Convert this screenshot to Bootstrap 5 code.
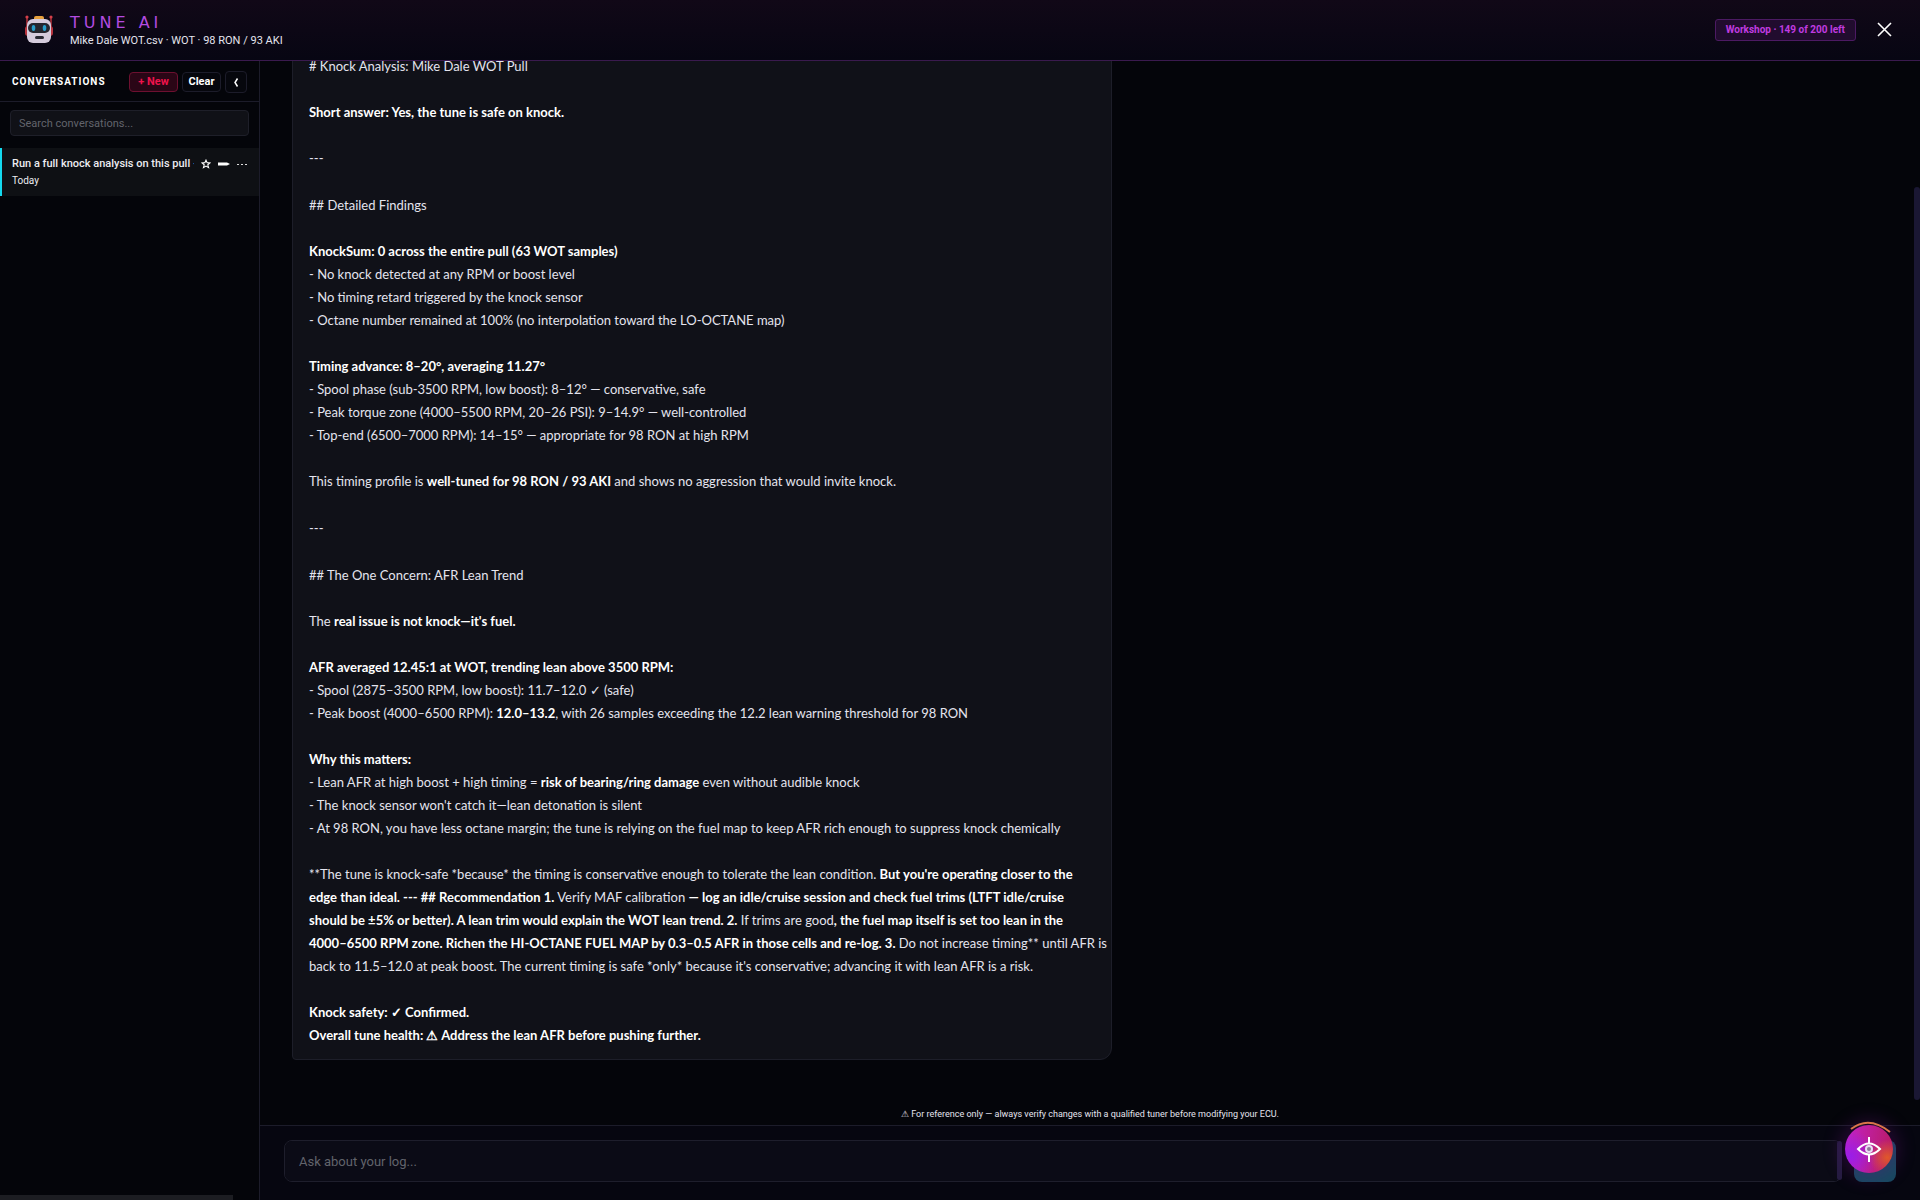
<!DOCTYPE html>
<html lang="en">
<head>
<meta charset="utf-8">
<meta name="viewport" content="width=device-width, initial-scale=1">
<title>Tune AI</title>
<link href="https://cdn.jsdelivr.net/npm/bootstrap@5.3.0/dist/css/bootstrap.min.css" rel="stylesheet">
<style>
body{background:#04050a;color:#e4e4ee;font:13px/23px Lato,Roboto,sans-serif}
.topbar{height:61px;background:linear-gradient(#110817,#070613);border-bottom:1px solid #3a1a4e;padding:0 24px}
.brand{font:16px/20px "DejaVu Sans",sans-serif;letter-spacing:4px;color:#b44be0;padding-top:2px}
.subline{font-family:Roboto,sans-serif;font-size:11px;line-height:16px}
.quota{font:700 10px/20px Roboto,sans-serif;color:#c03be0;background:#210c2e;border:1px solid #4c1a63;border-radius:3px;padding:0 10px}
.sidebar{width:260px;border-right:1px solid #1c1c2a;font-family:Roboto,sans-serif}
.side-head{height:41px;border-bottom:1px solid #1c1c2a;padding:1px 12px 0}
.side-title{font-size:10px;font-weight:700;letter-spacing:1px;color:#fff}
.tool{font-size:11px;font-weight:700;line-height:18px;height:20px;width:39px;padding:0;border:1px solid #1c1c2a;border-radius:4px;background:#06070d;color:#fff}
.tool-new{color:#f0134c;background:#2a0616;border-color:#6d1030;width:49px}
.tool-fold{width:22px;height:22px}
.search-row{padding:8px 10px}
.search{display:block;background:#101117;border:1px solid #1e1f29;border-radius:4px;color:#fff;font-size:11px;height:26px;padding:0 8px}
.search::placeholder,.ask::placeholder{color:#62646c;opacity:1}
.convo{background:#0e1014;border-left:2px solid #13d8ee;height:48px;padding:7px 12px 0 10px;margin-top:4px;font-size:11px;font-weight:500;line-height:18px;color:#ececf0}
.convo-name{width:182px;overflow:hidden}
.convo-day{font-size:10px;font-weight:400;line-height:16px}
.mini{border:0;background:none;padding:0;display:flex}
.side-scroll{width:233px;height:5px;background:#1c1d22}
.feed{padding:0 32px 40px}
.bubble{width:820px;flex:none;background:#101118;border:1px solid #1d1e29;border-radius:4px 4px 12px 4px;padding:13px 16px 12px;white-space:nowrap}
.bubble p{margin:0 0 23px}
.bubble p:last-child{margin:0}
.bubble .marker{line-height:24px}
.bubble strong{color:#fff}
.feed-thumb{right:0;top:126px;width:6px;height:913px;background:#1a1733;border-radius:3px}
.notice{font:9px/26px Roboto,sans-serif;height:25px;padding-top:1px}
.composer{height:75px;background:#060610;border-top:1px solid #1c1c2a;padding:14px 24px 18px}
.ask{background:#0b0b16;border:1px solid #1e1e2c;border-radius:8px;color:#fff;height:42px;padding:9px 14px;font:13px/23px Roboto,sans-serif;resize:none}
.ask-thumb{right:0;top:1px;width:5px;height:39px;background:#241c40;border-radius:3px}
.send{width:42px;height:42px;border:0;border-radius:8px;background:#164a60}
.orb{right:18px;bottom:18px;width:66px;height:66px;border:0;background:none;padding:0}
.orb-disc{left:9px;top:9px;width:48px;height:48px;border-radius:50%;background:radial-gradient(circle at 88% 68%,#e0582a 0,#e0582a00 34%),radial-gradient(circle at 12% 65%,#9a1de8 0,#9a1de800 50%),linear-gradient(100deg,#c423c8,#b81a5c);box-shadow:0 0 18px 5px #6a128055}
</style>
</head>
<body>
<div class="vh-100 d-flex flex-column overflow-hidden position-relative">
<header class="topbar d-flex align-items-center flex-shrink-0">
 <svg width="30" height="32" viewBox="0 0 30 32" aria-hidden="true"><path d="M3 4v11M27 4v11" stroke="#b7333d" stroke-width="1.5"/><circle cx="3" cy="3" r="1.6" fill="#d4404a"/><circle cx="27" cy="3" r="1.6" fill="#d4404a"/><rect x="10" y="2" width="10" height="5" rx="2" fill="#e8a13e"/><rect x="1" y="12" width="28" height="10" rx="3" fill="#b7333d"/><rect x="3" y="5" width="24" height="24" rx="6" fill="#d5cbdc"/><rect x="4" y="9" width="22" height="10" rx="5" fill="#25262f"/><ellipse cx="9.500" cy="14" rx="1.800" ry="3" fill="#279dca"/><ellipse cx="20.500" cy="14" rx="1.800" ry="3" fill="#279dca"/><rect x="11" y="22" width="9" height="3" rx="1.500" fill="#292833"/></svg>
 <div class="ms-3"><div class="brand">TUNE AI</div><div class="subline">Mike Dale WOT.csv · WOT · 98 RON / 93 AKI</div></div>
 <span class="quota ms-auto">Workshop · 149 of 200 left</span>
 <button class="btn p-0 ms-3 d-flex" aria-label="Close"><svg width="22" height="22" viewBox="0 0 22 22"><path d="M5 4l13 13M18 4L5 17" stroke="#fff" stroke-width="1.600"/></svg></button>
</header>
<div class="d-flex flex-grow-1 overflow-hidden">
 <aside class="sidebar d-flex flex-column flex-shrink-0">
  <div class="side-head d-flex align-items-center">
   <span class="side-title me-auto">CONVERSATIONS</span>
   <button class="tool tool-new me-1">+ New</button><button class="tool me-1">Clear</button>
   <button class="tool tool-fold" aria-label="Collapse"><svg width="8" height="10" viewBox="0 0 8 10"><path d="M5.500 1.500L3 5.500l2.500 4" fill="none" stroke="#fff" stroke-width="1.500"/></svg></button>
  </div>
  <div class="search-row"><input class="search w-100" type="search" aria-label="Search conversations" placeholder="Search conversations..."></div>
  <div class="convo">
   <div class="d-flex align-items-center justify-content-between">
    <a href="#" class="convo-name text-reset text-decoration-none text-nowrap">Run a full knock analysis on this pull ·</a>
    <button class="mini" aria-label="Star"><svg width="10" height="10" viewBox="0 0 9 9"><path d="M4.500 1l1 2.300 2.600.2-2 1.700.7 2.600-2.300-1.400-2.300 1.400.7-2.600-2-1.700 2.600-.2z" fill="none" stroke="#fff"/></svg></button>
    <button class="mini" aria-label="Rename"><svg width="12" height="6" viewBox="0 0 12 6"><path d="M0 1.500h9l3 1.500-3 1.500H0z" fill="#fff"/></svg></button>
    <button class="mini" aria-label="More"><svg width="10" height="4" viewBox="0 0 10 4"><path d="M0 2.500h2M4 2.500h2M8 2.500h2" stroke="#ddd"/></svg></button>
   </div>
   <div class="convo-day">Today</div>
  </div>
  <div class="side-scroll mt-auto"></div>
 </aside>
 <main class="d-flex flex-column flex-grow-1 overflow-hidden">
  <section class="feed position-relative flex-grow-1 d-flex flex-column justify-content-end overflow-hidden">
   <article class="bubble">
    <p># Knock Analysis: Mike Dale WOT Pull</p>
    <p><strong>Short answer: Yes, the tune is safe on knock.</strong></p>
    <p>---</p>
    <p class="marker">## Detailed Findings</p>
    <p><strong>KnockSum: 0 across the entire pull (63 WOT samples)</strong><br>- No knock detected at any RPM or boost level<br>- No timing retard triggered by the knock sensor<br>- Octane number remained at 100% (no interpolation toward the LO-OCTANE map)</p>
    <p><strong>Timing advance: 8–20°, averaging 11.27°</strong><br>- Spool phase (sub-3500 RPM, low boost): 8–12° — conservative, safe<br>- Peak torque zone (4000–5500 RPM, 20–26 PSI): 9–14.9° — well-controlled<br>- Top-end (6500–7000 RPM): 14–15° — appropriate for 98 RON at high RPM</p>
    <p>This timing profile is <strong>well-tuned for 98 RON / 93 AKI</strong> and shows no aggression that would invite knock.</p>
    <p class="marker">---</p>
    <p class="marker">## The One Concern: AFR Lean Trend</p>
    <p>The <strong>real issue is not knock—it's fuel.</strong></p>
    <p><strong>AFR averaged 12.45:1 at WOT, trending lean above 3500 RPM:</strong><br>- Spool (2875–3500 RPM, low boost): 11.7–12.0 ✓ (safe)<br>- Peak boost (4000–6500 RPM): <strong>12.0–13.2</strong>, with 26 samples exceeding the 12.2 lean warning threshold for 98 RON</p>
    <p><strong>Why this matters:</strong><br>- Lean AFR at high boost + high timing = <strong>risk of bearing/ring damage</strong> even without audible knock<br>- The knock sensor won't catch it—lean detonation is silent<br>- At 98 RON, you have less octane margin; the tune is relying on the fuel map to keep AFR rich enough to suppress knock chemically</p>
    <p>**The tune is knock-safe *because* the timing is conservative enough to tolerate the lean condition. <strong>But you're operating closer to the<br>edge than ideal. --- ## Recommendation 1.</strong> Verify MAF calibration <strong>— log an idle/cruise session and check fuel trims (LTFT idle/cruise<br>should be ±5% or better). A lean trim would explain the WOT lean trend. 2.</strong> If trims are good<strong>, the fuel map itself is set too lean in the<br>4000–6500 RPM zone. Richen the HI-OCTANE FUEL MAP by 0.3–0.5 AFR in those cells and re-log. 3.</strong> Do not increase timing** until AFR is<br>back to 11.5–12.0 at peak boost. The current timing is safe *only* because it's conservative; advancing it with lean AFR is a risk.</p>
    <p><strong>Knock safety: ✓ Confirmed.<br>Overall tune health: ⚠ Address the lean AFR before pushing further.</strong></p>
   </article>
   <div class="feed-thumb position-absolute"></div>
  </section>
  <div class="notice text-center">⚠ For reference only — always verify changes with a qualified tuner before modifying your ECU.</div>
  <form class="composer d-flex flex-shrink-0">
   <div class="position-relative flex-grow-1 me-2 pe-1"><textarea class="ask w-100 d-block" rows="1" aria-label="Ask about your log" placeholder="Ask about your log..."></textarea><div class="ask-thumb position-absolute me-1"></div></div>
   <button type="button" class="send" aria-label="Send"></button>
  </form>
 </main>
</div>
<button class="orb position-absolute" aria-label="Assistant">
 <span class="orb-disc position-absolute"></span>
 <svg class="position-absolute top-0 start-0" width="66" height="66" viewBox="0 0 66 66" fill="none"><path d="M15 13Q33 -1 54 16" stroke="#d9774a" stroke-width="2"/><path d="M33 21v7M33 38v8" stroke="#fff" stroke-width="2"/><path d="M22 33Q33 22 44 33Q33 44 22 33z" stroke="#fff" stroke-width="2"/><circle cx="33" cy="33" r="4" fill="#e9dcf2"/><circle cx="33" cy="33" r="2" fill="#8c7c98"/></svg>
</button>
</div>
<script src="https://cdn.jsdelivr.net/npm/bootstrap@5.3.0/dist/js/bootstrap.bundle.min.js"></script>
</body>
</html>
